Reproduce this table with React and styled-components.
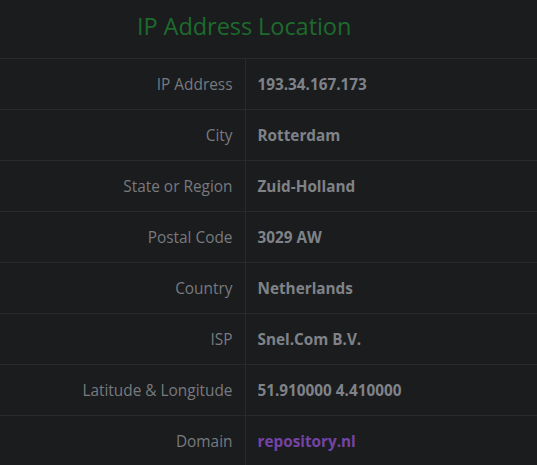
import React from "react";
import styled, { createGlobalStyle } from "styled-components";

const GlobalStyle = createGlobalStyle`
  html, body {
    margin: 0;
    padding: 0;
    background-color: #1b1c1e;
  }
  body {
    font-family: "Open Sans", "Noto Sans", "Liberation Sans", sans-serif;
  }
`;

const Page = styled.div`
  width: 537px;
  height: 465px;
  overflow: hidden;
  background-color: #1b1c1e;
`;

const Header = styled.div`
  height: 58px;
  display: flex;
  align-items: center;
  padding: 0 0 6px 137px;
  box-sizing: border-box;
`;

const Title = styled.h2`
  margin: 0;
  font-size: 23.6px;
  font-weight: 400;
  color: #1d6b2d;
  letter-spacing: -0.1px;
`;

const Table = styled.table`
  width: 100%;
  border-collapse: collapse;
`;

const Row = styled.tr`
  border-top: 1px solid #27292c;
`;

const Label = styled.td`
  width: 245px;
  box-sizing: border-box;
  height: 51px;
  padding: 0 12px 0 0;
  text-align: right;
  font-size: 15.4px;
  color: #777a7f;
  border-right: 1px solid #27292c;
`;

const Value = styled.td`
  padding: 0 0 0 12px;
  font-size: 15.3px;
  font-weight: 700;
  color: ${(p) => (p.$link ? "#7443a6" : "#7f8388")};
`;

const rows = [
  ["IP Address", "193.34.167.173"],
  ["City", "Rotterdam"],
  ["State or Region", "Zuid-Holland"],
  ["Postal Code", "3029 AW"],
  ["Country", "Netherlands"],
  ["ISP", "Snel.Com B.V."],
  ["Latitude & Longitude", "51.910000 4.410000"],
  ["Domain", "repository.nl", true],
];

export default function App() {
  return (
    <Page>
      <GlobalStyle />
      <Header>
        <Title>IP Address Location</Title>
      </Header>
      <Table>
        <tbody>
          {rows.map(([label, value, link]) => (
            <Row key={label}>
              <Label>{label}</Label>
              <Value $link={link}>{value}</Value>
            </Row>
          ))}
        </tbody>
      </Table>
    </Page>
  );
}
